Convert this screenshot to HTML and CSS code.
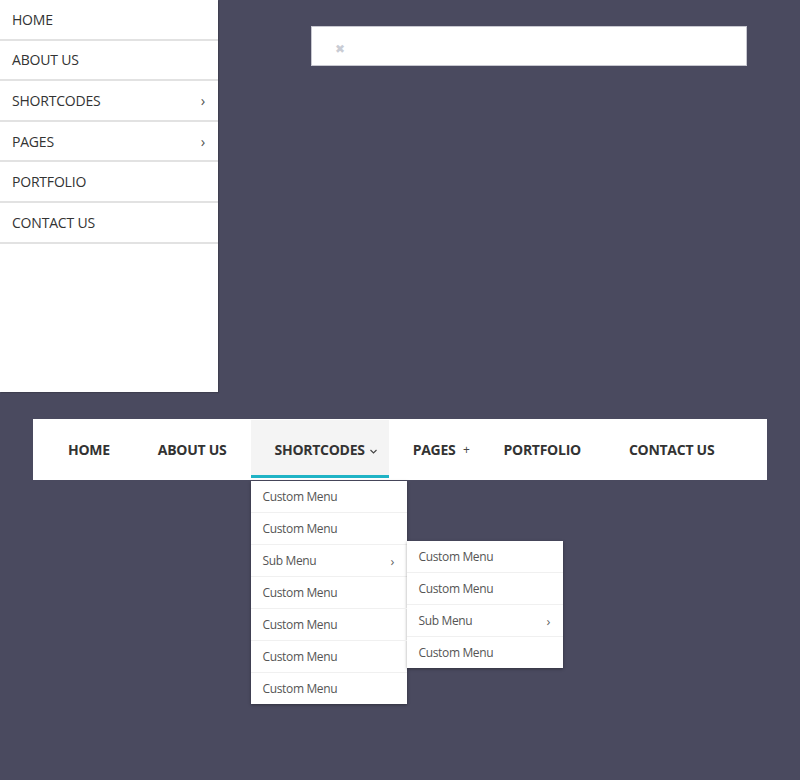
FILE: index.html
```html
<!DOCTYPE html>
<html>
<head>
<meta charset="utf-8">
<link rel="stylesheet" href="styles.css">
</head>
<body>
<div class="top">
  <nav class="side">
    <a class="side-item">HOME</a>
    <a class="side-item">ABOUT US</a>
    <a class="side-item has-sub">SHORTCODES<span class="chev">›</span></a>
    <a class="side-item has-sub">PAGES<span class="chev">›</span></a>
    <a class="side-item">PORTFOLIO</a>
    <a class="side-item">CONTACT US</a>
  </nav>
  <div class="closebar"><span class="close">✖</span></div>
</div>
<div class="navbar">
  <a class="nav-item">HOME</a>
  <a class="nav-item">ABOUT US</a>
  <div class="nav-item active">SHORTCODES<svg class="down" width="7" height="5" viewBox="0 0 7 5"><path d="M0.5 1 L3.5 4 L6.5 1" fill="none" stroke="#444" stroke-width="1.1"/></svg>
    <ul class="drop">
      <li class="drop-item">Custom Menu</li>
      <li class="drop-item">Custom Menu</li>
      <li class="drop-item sub">Sub Menu<span class="dchev">›</span>
        <ul class="drop subdrop">
          <li class="drop-item">Custom Menu</li>
          <li class="drop-item">Custom Menu</li>
          <li class="drop-item">Sub Menu<span class="dchev">›</span></li>
          <li class="drop-item">Custom Menu</li>
        </ul>
      </li>
      <li class="drop-item">Custom Menu</li>
      <li class="drop-item">Custom Menu</li>
      <li class="drop-item">Custom Menu</li>
      <li class="drop-item">Custom Menu</li>
    </ul>
  </div>
  <a class="nav-item">PAGES<span class="plus">+</span></a>
  <a class="nav-item">PORTFOLIO</a>
  <a class="nav-item">CONTACT US</a>
</div>
</body>
</html>
```
FILE: styles.css
```css
html, body {
  margin: 0;
  padding: 0;
}
body {
  background: #4a4a5f;
  font-family: "Open Sans", "DejaVu Sans", sans-serif;
  width: 800px;
  height: 780px;
  overflow: hidden;
}
.top {
  display: flex;
  align-items: flex-start;
}
.side {
  width: 218px;
  height: 392px;
  background: #fff;
  box-shadow: 1px 1px 1px rgba(0,0,0,0.15);
  display: flex;
  flex-direction: column;
}
.side-item {
  display: flex;
  align-items: center;
  justify-content: space-between;
  height: 38.6px;
  padding: 0 12px;
  border-bottom: 2px solid #e2e2e2;
  font-size: 14px;
  color: #333;
  letter-spacing: -0.2px;
}
.chev {
  font-size: 15px;
  color: #555;
  margin-right: 1px;
}
.closebar {
  margin-left: 93px;
  margin-top: 26px;
  width: 434px;
  height: 38px;
  background: #fff;
  border: 1px solid #c8c8d0;
  display: flex;
  align-items: center;
}
.close {
  margin-left: 23px;
  margin-top: 4px;
  font-size: 12px;
  color: #c9ccd4;
}
.navbar {
  margin: 27px 0 0 33px;
  width: 723px;
  padding-left: 11px;
  height: 61px;
  background: #fff;
  display: flex;
  align-items: stretch;
}
.nav-item {
  position: relative;
  display: flex;
  align-items: center;
  padding: 0 24px;
  font-size: 14px;
  font-weight: 700;
  color: #333;
  letter-spacing: -0.27px;
}
.nav-item.active {
  background: #f4f4f4;
  margin-top: 1px;
  margin-bottom: 2px;
  border-bottom: 3px solid #1fb3c5;
  padding-top: 3px;
}
.down {
  position: absolute;
  right: 12px;
  top: 29px;
}
.plus {
  position: absolute;
  right: 10px;
  font-weight: 400;
  font-size: 12px;
  color: #444;
}
.drop {
  position: absolute;
  left: 0;
  top: 61px;
  width: 156px;
  margin: 0;
  padding: 0;
  list-style: none;
  background: #fff;
  box-shadow: 0 1px 3px rgba(0,0,0,0.35);
}
.drop-item {
  position: relative;
  height: 31px;
  padding: 0 12px;
  display: flex;
  align-items: center;
  justify-content: space-between;
  border-bottom: 1px solid #f0f0f0;
  font-size: 12px;
  font-weight: 400;
  color: #555;
  letter-spacing: -0.35px;
}
.drop-item:last-child {
  border-bottom: none;
  height: 31px;
}
.dchev {
  font-size: 13px;
  color: #666;
  letter-spacing: 0;
}
.subdrop {
  left: 156px;
  top: -4px;
}
```
